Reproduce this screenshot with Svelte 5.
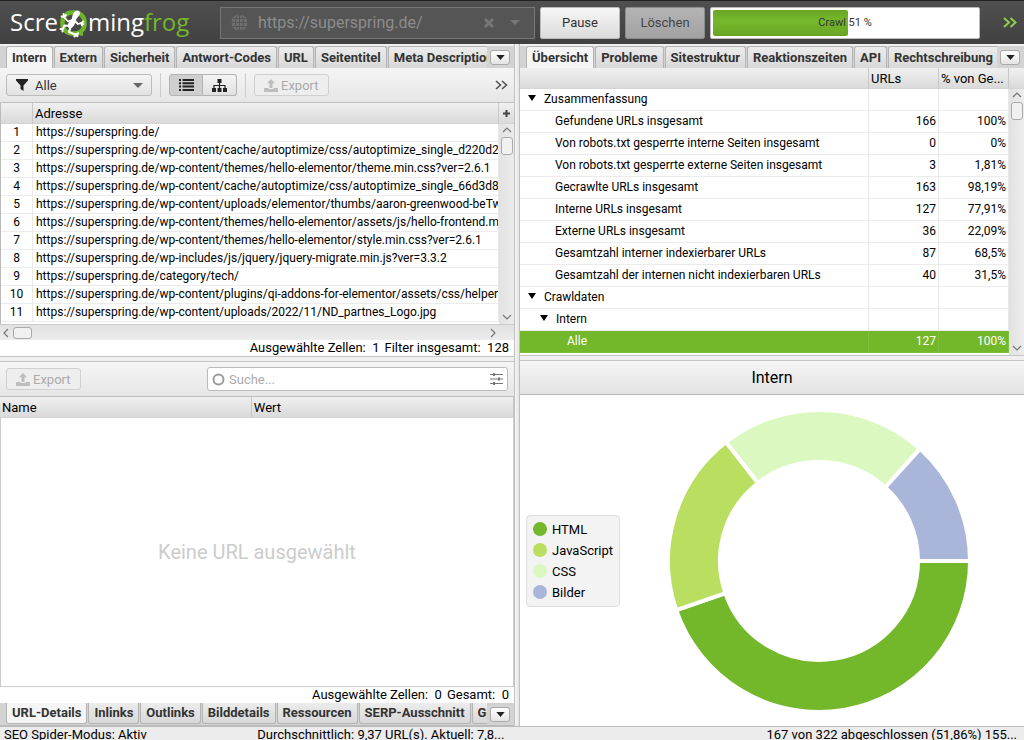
<script>
  const mainTabs = ['Intern', 'Extern', 'Sicherheit', 'Antwort-Codes', 'URL', 'Seitentitel', 'Meta Description'];
  const detailTabs = ['URL-Details', 'Inlinks', 'Outlinks', 'Bilddetails', 'Ressourcen', 'SERP-Ausschnitt', 'Gerendert'];
  const overviewTabs = ['Übersicht', 'Probleme', 'Sitestruktur', 'Reaktionszeiten', 'API', 'Rechtschreibung'];

  const urls = [
    'https://superspring.de/',
    'https://superspring.de/wp-content/cache/autoptimize/css/autoptimize_single_d220d2',
    'https://superspring.de/wp-content/themes/hello-elementor/theme.min.css?ver=2.6.1',
    'https://superspring.de/wp-content/cache/autoptimize/css/autoptimize_single_66d3d8',
    'https://superspring.de/wp-content/uploads/elementor/thumbs/aaron-greenwood-beTw',
    'https://superspring.de/wp-content/themes/hello-elementor/assets/js/hello-frontend.m',
    'https://superspring.de/wp-content/themes/hello-elementor/style.min.css?ver=2.6.1',
    'https://superspring.de/wp-includes/js/jquery/jquery-migrate.min.js?ver=3.3.2',
    'https://superspring.de/category/tech/',
    'https://superspring.de/wp-content/plugins/qi-addons-for-elementor/assets/css/helper',
    'https://superspring.de/wp-content/uploads/2022/11/ND_partnes_Logo.jpg'
  ];

  const overview = [
    { label: 'Zusammenfassung', level: 0, open: true },
    { label: 'Gefundene URLs insgesamt', level: 1, urls: '166', pct: '100%' },
    { label: 'Von robots.txt gesperrte interne Seiten insgesamt', level: 1, urls: '0', pct: '0%' },
    { label: 'Von robots.txt gesperrte externe Seiten insgesamt', level: 1, urls: '3', pct: '1,81%' },
    { label: 'Gecrawlte URLs insgesamt', level: 1, urls: '163', pct: '98,19%' },
    { label: 'Interne URLs insgesamt', level: 1, urls: '127', pct: '77,91%' },
    { label: 'Externe URLs insgesamt', level: 1, urls: '36', pct: '22,09%' },
    { label: 'Gesamtzahl interner indexierbarer URLs', level: 1, urls: '87', pct: '68,5%' },
    { label: 'Gesamtzahl der internen nicht indexierbaren URLs', level: 1, urls: '40', pct: '31,5%' },
    { label: 'Crawldaten', level: 0, open: true },
    { label: 'Intern', level: 1, open: true },
    { label: 'Alle', level: 2, urls: '127', pct: '100%' }
  ];

  // start and end in degrees, clockwise from three o'clock
  const segments = [
    { name: 'HTML', color: '#73b72b', from: 0, to: 161 },
    { name: 'JavaScript', color: '#bade5f', from: 161, to: 232 },
    { name: 'CSS', color: '#daf8c0', from: 232, to: 312 },
    { name: 'Bilder', color: '#aab6d9', from: 312, to: 360 }
  ];

  let activeMain = $state('Intern');
  let activeDetail = $state('URL-Details');
  let activeOverview = $state('Übersicht');
  let selectedRow = $state('Alle');
  let view = $state('list');
  let address = $state('https://superspring.de/');
  let search = $state('');
  let progress = $state(51);

  function point(radius, deg) {
    const rad = (deg * Math.PI) / 180;
    return `${(150 + radius * Math.cos(rad)).toFixed(2)} ${(150 + radius * Math.sin(rad)).toFixed(2)}`;
  }

  function ring({ from, to }) {
    const large = to - from > 180 ? 1 : 0;
    return `M${point(151, from)}A151 151 0 ${large} 1 ${point(151, to)}L${point(99, to)}A99 99 0 ${large} 0 ${point(99, from)}Z`;
  }
</script>

{#snippet tabBar(names, active, pick, label, bottom)}
  <div class="tab-bar" class:bottom>
    <div class="tabs" role="tablist" aria-label={label}>
      {#each names as name}
        <button class="tab" class:active={name === active} role="tab" aria-selected={name === active} onclick={() => pick(name)}>{name}</button>
      {/each}
    </div>
    <button class="tab-menu" aria-label="Weitere Tabs">
      <svg width="9" height="5" viewBox="0 0 10 6"><path d="M0 0h10L5 6z" fill="#222" /></svg>
    </button>
  </div>
{/snippet}

{#snippet chevron(dir)}
  <svg class="chevron {dir}" width="10" height="6" viewBox="0 0 10 6"><path d="M1 5l4-4 4 4" fill="none" stroke="#777" stroke-width="1.2" /></svg>
{/snippet}

{#snippet exportButton()}
  <button class="btn export" disabled>
    <svg width="14" height="13" viewBox="0 0 14 13" fill="#bdbdbd">
      <path d="M7 0l4 4.2H8.500V9h-3V4.200H3zM0 9h4.500v1h5V9H14v4H0z" />
    </svg>
    Export
  </button>
{/snippet}

<div class="app">
  <header class="top-bar">
    <div class="logo" aria-label="Screamingfrog">
      <span>Scre</span>
      <svg width="30" height="30" viewBox="0 0 30 30">
        <rect x="4.500" y="4.500" width="22" height="21" rx="9.500" fill="none" stroke="#6fb52c" stroke-width="4.500" />
        <path d="M17 24.500l8 2" stroke="#6fb52c" stroke-width="3" />
        <g fill="none" stroke="#fff" stroke-linecap="round" stroke-linejoin="round">
          <path d="M14 12l-4 1.500-4-4.500M6 9L3.500 8.500M6 9l-.5-3M6 9l2-2" stroke-width="1.800" />
          <path d="M17 13l3 3 3-1M23 15l2.500-1.500M23 15l2.500 1M23 15l1 2.500" stroke-width="1.800" />
          <path d="M11.500 18l-5-.5-2 4M4.500 21.500l-2-.5M4.500 21.500v2" stroke-width="2" />
          <path d="M12.500 19l-1.500 5 6 2.500M17 26.500l3-1M17 26.500l2.500 1.500M17 26.500l-.5 2" stroke-width="2.200" />
        </g>
        <path d="M20 2.500c2.500 1 2.500 4 0 6.500-1 1-2 2.500-2.500 5-.6 3-3 6-5.500 6.500-2.500-.5-3-3-1.500-5.500 1-1.800 3-2.500 3.500-4.500C14.500 6 16.500 2 20 2.500z" fill="#fff" />
      </svg>
      <span>ming</span><span class="frog">frog</span>
    </div>

    <div class="address">
      <svg width="17" height="17" viewBox="0 0 17 17">
        <circle cx="8.500" cy="8.500" r="8" fill="#707070" />
        <path d="M8.500 0v17M0 8.500h17M2 4.500h13M2 12.500h13" stroke="#555" fill="none" />
        <ellipse cx="8.500" cy="8.500" rx="4" ry="8" stroke="#555" fill="none" />
      </svg>
      <input type="text" aria-label="URL" bind:value={address} />
      <button class="plain" aria-label="Leeren" onclick={() => (address = '')}>
        <svg width="10" height="10" viewBox="0 0 10 10"><path d="M1 1l8 8M9 1L1 9" stroke="#777" stroke-width="2.800" /></svg>
      </button>
      <button class="plain" aria-label="Verlauf">
        <svg width="10" height="5" viewBox="0 0 10 5"><path d="M0 0h10L5 5z" fill="#777" /></svg>
      </button>
    </div>

    <button class="action">Pause</button>
    <button class="action dim">Löschen</button>

    <div class="progress" role="progressbar" aria-label="Crawl" aria-valuenow={progress} aria-valuemin="0" aria-valuemax="100">
      <div class="progress-fill" style="width: {progress}%"></div>
      <span class="progress-text">Crawl {progress} %</span>
    </div>

    <button class="plain more" aria-label="Mehr">
      <svg width="14" height="11" viewBox="0 0 14 11" fill="none" stroke-width="2">
        <path d="M1 1l5 4.500-5 4.500M7.500 1l5 4.500-5 4.500" stroke="#8fce4a" />
      </svg>
    </button>
  </header>

  <main>
    <section class="left">
      {@render tabBar(mainTabs, activeMain, (n) => (activeMain = n), 'Daten', false)}

      <div class="toolbar">
        <div class="filter">
          <svg width="12" height="12" viewBox="0 0 12 12"><path d="M0 0h12v1.500L7.500 6.500V12l-3-2V6.500L0 1.500z" fill="#222" /></svg>
          <select aria-label="Filter">
            <option>Alle</option>
            <option>HTML</option>
            <option>JavaScript</option>
            <option>CSS</option>
            <option>Bilder</option>
          </select>
          <svg width="10" height="5" viewBox="0 0 10 5"><path d="M0 0h10L5 5z" fill="#666" /></svg>
        </div>
        <span class="sep"></span>
        <div class="toggle">
          <button class:on={view === 'list'} aria-label="Liste" onclick={() => (view = 'list')}>
            <svg width="15" height="12" viewBox="0 0 15 12"><path d="M0 1h2M0 4.300h2M0 7.600h2M0 11h2M3.500 1H15M3.500 4.300H15M3.500 7.600H15M3.500 11H15" stroke="#222" stroke-width="2" /></svg>
          </button>
          <button class:on={view === 'tree'} aria-label="Baum" onclick={() => (view = 'tree')}>
            <svg width="15" height="13" viewBox="0 0 15 13" fill="#222">
              <path d="M5.500 0h4v4h-4zM0 9h4v4H0zM5.500 9h4v4h-4zM11 9h4v4h-4z" />
              <path d="M7.500 4v5M2 9V6.500h11V9" fill="none" stroke="#222" stroke-width="1.200" />
            </svg>
          </button>
        </div>
        <span class="sep"></span>
        {@render exportButton()}
        <button class="plain overflow" aria-label="Mehr">
          <svg width="13" height="10" viewBox="0 0 13 10"><path d="M1 1l4.500 4L1 9M7 1l4.500 4L7 9" fill="none" stroke="#555" stroke-width="1.600" /></svg>
        </button>
      </div>

      <div class="with-scroll urls">
        <div class="clip">
          <table>
            <colgroup><col class="num" /><col /></colgroup>
            <thead><tr><th aria-label="Zeile"></th><th>Adresse</th></tr></thead>
            <tbody>
              {#each urls as url, i}
                <tr><td class="center">{i + 1}</td><td>{url}</td></tr>
              {/each}
            </tbody>
          </table>
        </div>
        <div class="scroll-side">
          <button class="plain corner" aria-label="Spalten">
            <svg width="7" height="7" viewBox="0 0 7 7"><path d="M3.500 0v7M0 3.500h7" stroke="#444" stroke-width="2" /></svg>
          </button>
          <div class="track">
            {@render chevron('up')}
            <span class="thumb"></span>
            {@render chevron('down')}
          </div>
        </div>
      </div>
      <div class="track-x">
        {@render chevron('west')}
        <span class="thumb"></span>
        {@render chevron('east')}
      </div>
      <div class="counts"><span>Ausgewählte Zellen:&nbsp; 1</span><span>Filter insgesamt:&nbsp; 128</span></div>

      <div class="splitter"></div>

      <div class="toolbar detail">
        {@render exportButton()}
        <div class="search">
          <svg width="13" height="13" viewBox="0 0 13 13"><circle cx="6.500" cy="6.500" r="5" fill="none" stroke="#999" stroke-width="2" /></svg>
          <input type="text" aria-label="Suche" placeholder="Suche..." bind:value={search} />
          <svg width="13" height="12" viewBox="0 0 13 12" stroke="#777" fill="#777">
            <path d="M0 1.500h13M0 6h13M0 10.500h13" />
            <path d="M4 0v3M9 4.500v3M4 9v3" stroke-width="2" />
          </svg>
        </div>
      </div>
      <table class="detail-table">
        <thead><tr><th class="name">Name</th><th>Wert</th></tr></thead>
      </table>
      <div class="empty">Keine URL ausgewählt</div>
      <div class="counts"><span>Ausgewählte Zellen:&nbsp; 0</span><span>Gesamt:&nbsp; 0</span></div>
      {@render tabBar(detailTabs, activeDetail, (n) => (activeDetail = n), 'Details', true)}
    </section>

    <div class="splitter-v"></div>

    <section class="right">
      {@render tabBar(overviewTabs, activeOverview, (n) => (activeOverview = n), 'Übersicht', false)}

      <div class="with-scroll overview">
        <div class="clip">
          <table>
            <colgroup><col /><col class="value" /><col class="value" /></colgroup>
            <thead><tr><th aria-label="Name"></th><th>URLs</th><th>% von Ge...</th></tr></thead>
            <tbody>
              {#each overview as row}
                <tr class:selected={row.label === selectedRow} onclick={() => (selectedRow = row.label)}>
                  <td class="level-{row.level}">
                    {#if row.open}<svg width="8" height="6" viewBox="0 0 8 6"><path d="M0 0h8L4 6z" fill="#000" /></svg>{/if}{row.label}
                  </td>
                  <td class="end">{row.urls ?? ''}</td>
                  <td class="end">{row.pct ?? ''}</td>
                </tr>
              {/each}
            </tbody>
          </table>
        </div>
        <div class="scroll-side">
          <div class="corner"></div>
          <div class="track">
            {@render chevron('up')}
            <span class="thumb"></span>
            {@render chevron('down')}
          </div>
        </div>
      </div>

      <div class="splitter"></div>
      <h2>Intern</h2>
      <div class="chart">
        <ul class="legend">
          {#each segments as s}
            <li><svg width="14" height="14" viewBox="0 0 14 14"><circle cx="7" cy="7" r="7" fill={s.color} /></svg>{s.name}</li>
          {/each}
        </ul>
        <div class="donut">
          <svg width="300" height="300" viewBox="0 0 300 300" role="img" aria-label="Intern">
            {#each segments as s}
              <path d={ring(s)} fill={s.color} stroke="#fff" stroke-width="4" />
            {/each}
          </svg>
        </div>
      </div>
    </section>
  </main>

  <footer>
    <span class="mode">SEO Spider-Modus: Aktiv</span>
    <span>Durchschnittlich: 9,37 URL(s). Aktuell: 7,8...</span>
    <span class="done">167 von 322 abgeschlossen (51,86%) 155...</span>
  </footer>
</div>

<style>
  :global(body) {
    margin: 0;
  }

  .app {
    display: flex;
    flex-direction: column;
    height: 100vh;
    overflow: hidden;
    font-family: Roboto, "Liberation Sans", sans-serif;
    font-size: 13px;
    color: #000;
    background: #fff;
  }

  .app * {
    box-sizing: border-box;
  }

  button,
  input,
  select {
    font: inherit;
    color: inherit;
  }

  svg {
    display: block;
    flex: none;
  }

  .plain {
    display: flex;
    align-items: center;
    padding: 0;
    border: 0;
    background: none;
  }

  /* top bar */
  .top-bar {
    display: flex;
    align-items: center;
    gap: 5px;
    flex: none;
    height: 44px;
    padding: 0 7px 0 10px;
    border-top: 1px solid #222;
    background: linear-gradient(#4f4f4f, #414141);
  }

  .logo {
    display: flex;
    align-items: center;
    width: 205px;
    font-family: "Open Sans", sans-serif;
    font-size: 24px;
    line-height: 36px;
    color: #fff;
  }

  .logo span {
    padding-bottom: 2px;
  }

  .frog {
    color: #73b72b;
  }

  .address {
    display: flex;
    align-items: center;
    flex: 1;
    height: 32px;
    gap: 16px;
    padding: 0 14px 0 10px;
    border: 1px solid #777;
    background: #555;
  }

  .address input {
    flex: 1;
    min-width: 0;
    padding: 0;
    border: 0;
    outline: 0;
    background: none;
    font-size: 16px;
    color: #8c8c8c;
    margin-left: -6px;
  }

  .action {
    width: 80px;
    height: 32px;
    border: 1px solid #bbb;
    border-radius: 2px;
    background: linear-gradient(#f6f6f6, #dcdcdc);
    color: #333;
  }

  .action.dim {
    border-color: #8c8c8c;
    background: linear-gradient(#b4b4b4, #a2a2a2);
    color: #444;
  }

  .progress {
    position: relative;
    width: 270px;
    height: 32px;
    padding: 2px;
    border: 1px solid #bbb;
    border-radius: 2px;
    background: #fff;
  }

  .progress-fill {
    height: 100%;
    border-radius: 2px;
    background: linear-gradient(#68a425, #76b92c 40%, #68a425);
  }

  .progress-text {
    position: absolute;
    inset: 0;
    text-align: center;
    font-size: 11px;
    line-height: 30px;
    color: #333;
  }

  .more {
    margin-left: 18px;
  }

  /* panels */
  main {
    display: grid;
    grid-template-columns: 514fr 6px 504fr;
    flex: 1;
    min-height: 0;
  }

  .left,
  .right {
    display: flex;
    flex-direction: column;
    min-width: 0;
    min-height: 0;
    border-top: 2px solid #f0f0f0;
  }

  .splitter {
    flex: none;
    height: 6px;
    border-top: 1px solid #c4c4c4;
    border-bottom: 1px solid #c4c4c4;
    background: #f0f0f0;
  }

  .splitter-v {
    border-left: 1px solid #c0c0c0;
    border-right: 1px solid #c0c0c0;
    background: linear-gradient(90deg, #f6f6f6, #e4e4e4);
  }

  .tab-bar {
    display: flex;
    align-items: center;
    flex: none;
    height: 22px;
    padding: 0 4px 0 6px;
    background: #d3d3d3;
  }

  .tabs {
    display: flex;
    align-self: stretch;
    gap: 1px;
    flex: 1;
    min-width: 0;
    overflow: hidden;
  }

  .tab {
    flex: none;
    padding: 0 5px;
    border: 1px solid #b4b4b4;
    border-bottom: 0;
    border-radius: 3px 3px 0 0;
    background: linear-gradient(#ececec, #d8d8d8);
    font-weight: 700;
    line-height: 20px;
    color: #333;
    white-space: nowrap;
  }

  .tab.active {
    background: #f5f5f5;
  }

  .bottom {
    border-bottom: 1px solid #bbb;
    height: 23px;
  }

  .bottom .tab {
    height: 21px;
    border-top: 0;
    border-bottom: 1px solid #b4b4b4;
    border-radius: 0 0 3px 3px;
  }

  .tab-menu {
    display: flex;
    align-items: center;
    justify-content: center;
    width: 20px;
    height: 15px;
    margin-left: 3px;
    padding: 0;
    border: 1px solid #aaa;
    border-radius: 3px;
    background: linear-gradient(#fff, #e4e4e4);
  }

  .toolbar {
    display: flex;
    align-items: center;
    gap: 8px;
    flex: none;
    height: 35px;
    padding: 0 6px;
    border-bottom: 1px solid #c0c0c0;
    background: linear-gradient(#f5f5f5, #e6e6e6);
  }

  .filter {
    display: flex;
    align-items: center;
    gap: 7px;
    width: 146px;
    height: 22px;
    padding: 0 8px 0 9px;
    border: 1px solid #bbb;
    border-radius: 3px;
    background: linear-gradient(#f4f4f4, #e2e2e2);
  }

  .filter select {
    flex: 1;
    min-width: 0;
    padding: 0;
    border: 0;
    appearance: none;
    background: none;
    color: #333;
  }

  .sep {
    width: 1px;
    height: 24px;
    background: #ccc;
  }

  .toggle {
    display: flex;
  }

  .toggle button {
    display: flex;
    align-items: center;
    justify-content: center;
    width: 34px;
    height: 22px;
    padding: 0;
    border: 1px solid #b4b4b4;
    background: linear-gradient(#f4f4f4, #e0e0e0);
  }

  .toggle button:first-child {
    border-radius: 3px 0 0 3px;
  }

  .toggle button:last-child {
    border-left: 0;
    border-radius: 0 3px 3px 0;
  }

  .toggle button.on {
    background: #cfcfcf;
  }

  .btn {
    display: flex;
    align-items: center;
    gap: 3px;
    height: 22px;
    padding: 0 9px;
    border: 1px solid #d0d0d0;
    border-radius: 3px;
    background: #eee;
    color: #aaa;
  }

  .overflow {
    margin-left: auto;
  }

  /* tables */
  table {
    width: 100%;
    border-collapse: separate;
    border-spacing: 0;
    table-layout: fixed;
  }

  th {
    height: 21px;
    padding: 0 2px;
    border-right: 1px solid #c8c8c8;
    border-bottom: 1px solid #d4d4d4;
    background: linear-gradient(#f0f0f0, #dadada);
    font-weight: 400;
    text-align: left;
  }

  td {
    height: 18px;
    padding: 0 3px;
    border-right: 1px solid #e8e8e8;
    border-bottom: 1px solid #ececec;
    font-size: 12px;
    line-height: 17px;
    white-space: nowrap;
    overflow: hidden;
  }

  .num {
    width: 32px;
  }

  .value {
    width: 70px;
  }

  .name {
    width: 49%;
  }

  .center {
    text-align: center;
  }

  .with-scroll {
    display: flex;
    flex: none;
  }

  .clip {
    flex: 1;
    min-width: 0;
    overflow: hidden;
  }

  .urls {
    height: 221px;
    border-left: 1px solid #bbb;
  }

  .overview {
    height: 287px;
  }

  .overview td {
    height: 22px;
    line-height: 21px;
  }

  .overview td.level-0 {
    padding-left: 8px;
  }

  .overview td.level-1 {
    padding-left: 35px;
  }

  .overview td.level-1:has(svg) {
    padding-left: 20px;
  }

  .overview td.level-2 {
    padding-left: 47px;
  }

  td svg {
    display: inline-block;
    margin-right: 8px;
    vertical-align: 2px;
  }

  td.end {
    text-align: right;
    padding: 0 2px;
  }

  .selected td {
    border-color: #80be40;
    background: #73b72b;
    color: #fff;
  }

  .scroll-side {
    display: flex;
    flex-direction: column;
    width: 15px;
  }

  .corner {
    justify-content: center;
    flex: none;
    height: 21px;
    border-bottom: 1px solid #d4d4d4;
    background: linear-gradient(#f0f0f0, #dadada);
  }

  .track {
    display: flex;
    flex: 1;
    flex-direction: column;
    align-items: center;
    padding: 3px 0 4px;
    background: linear-gradient(90deg, #e2e2e2, #ececec);
  }

  .track .thumb {
    width: 12px;
    height: 18px;
    margin-top: 4px;
  }

  .thumb {
    border: 1px solid #aaa;
    border-radius: 3px;
    background: #f0f0f0;
  }

  .down {
    margin-top: auto;
    transform: rotate(180deg);
  }

  .west {
    transform: rotate(-90deg);
  }

  .east {
    margin-left: auto;
    transform: rotate(90deg);
  }

  .track-x {
    display: flex;
    align-items: center;
    flex: none;
    height: 16px;
    padding: 0 16px 0 1px;
    border-top: 1px solid #ccc;
    background: linear-gradient(#e2e2e2, #ececec);
  }

  .track-x .thumb {
    width: 19px;
    height: 12px;
    margin-left: 2px;
  }

  .counts {
    display: flex;
    justify-content: flex-end;
    gap: 5px;
    flex: none;
    padding-right: 5px;
    line-height: 16px;
  }

  .detail {
    justify-content: space-between;
  }

  .search {
    display: flex;
    align-items: center;
    gap: 4px;
    width: 301px;
    height: 24px;
    padding: 0 4px;
    border: 1px solid #bbb;
    border-radius: 3px;
    background: #fff;
  }

  .search input {
    flex: 1;
    min-width: 0;
    padding: 0;
    border: 0;
    outline: 0;
  }

  .search input::placeholder {
    color: #aaa;
  }

  .empty {
    display: flex;
    align-items: center;
    justify-content: center;
    flex: 1;
    border: 1px solid #ccc;
    border-top: 0;
    font-size: 20px;
    color: #ccc;
  }

  h2 {
    flex: none;
    margin: 0;
    border-bottom: 1px solid #b8b8b8;
    background: linear-gradient(#f6f6f6, #e2e2e2);
    font-size: 16px;
    font-weight: 400;
    line-height: 33px;
    text-align: center;
  }

  .chart {
    display: flex;
    align-items: center;
    flex: 1;
    padding: 0 55px 0 6px;
  }

  .legend {
    display: flex;
    flex-direction: column;
    margin: 0;
    padding: 3px 6px;
    border: 1px solid #ddd;
    border-radius: 4px;
    background: #f3f3f3;
    list-style: none;
  }

  .legend li {
    display: flex;
    align-items: center;
    gap: 5px;
    line-height: 21px;
  }

  .donut {
    display: flex;
    flex: 1;
    justify-content: flex-end;
  }

  footer {
    display: flex;
    flex: none;
    height: 14px;
    padding: 0 7px 0 4px;
    border-top: 1px solid #bbb;
    background: #ececec;
    line-height: 15px;
    white-space: nowrap;
  }

  .mode {
    width: 25%;
  }

  .done {
    margin-left: auto;
  }
</style>
